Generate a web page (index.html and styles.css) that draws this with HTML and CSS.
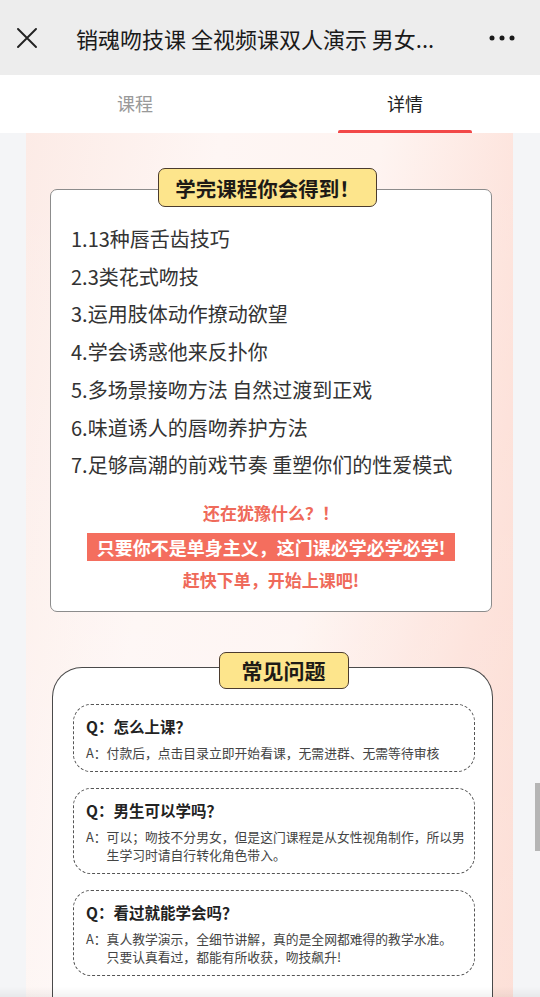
FILE: index.html
```html
<!DOCTYPE html>
<html lang="zh-CN">
<head>
<meta charset="utf-8">
<title>销魂吻技课</title>
<link rel="stylesheet" href="styles.css">
</head>
<body>
<header class="topbar">
  <svg class="icon-close" width="20" height="20" viewBox="0 0 20 20"><path d="M1 1 L19 19 M19 1 L1 19" stroke="#222" stroke-width="1.9" fill="none" stroke-linecap="round"/></svg>
  <div class="title">销魂吻技课 全视频课双人演示 男女...</div>
  <svg class="icon-more" width="26" height="6" viewBox="0 0 26 6"><circle cx="3" cy="3" r="2.5" fill="#1a1a1a"/><circle cx="13" cy="3" r="2.5" fill="#1a1a1a"/><circle cx="23" cy="3" r="2.5" fill="#1a1a1a"/></svg>
</header>
<nav class="tabs">
  <div class="tab"><span class="tab-text">课程</span></div>
  <div class="tab active"><span class="tab-text">详情</span><span class="tab-bar"></span></div>
</nav>
<main class="content">
  <section class="panel">
    <div class="card card-gain">
      <div class="badge badge-gain">学完课程你会得到！</div>
      <ol class="gain-list">
        <li>1.13种唇舌齿技巧</li>
        <li>2.3类花式吻技</li>
        <li>3.运用肢体动作撩动欲望</li>
        <li>4.学会诱惑他来反扑你</li>
        <li>5.多场景接吻方法 自然过渡到正戏</li>
        <li>6.味道诱人的唇吻养护方法</li>
        <li>7.足够高潮的前戏节奏 重塑你们的性爱模式</li>
      </ol>
      <p class="red-line first">还在犹豫什么？！</p>
      <p class="red-banner">只要你不是单身主义，这门课必学必学必学!</p>
      <p class="red-line">赶快下单，开始上课吧!</p>
    </div>
    <div class="card card-faq">
      <div class="badge badge-faq">常见问题</div>
      <div class="faq">
        <div class="q">Q：怎么上课？</div>
        <div class="a"><span class="a-label">A：</span><span class="a-text">付款后，点击目录立即开始看课，无需进群、无需等待审核</span></div>
      </div>
      <div class="faq">
        <div class="q">Q：男生可以学吗？</div>
        <div class="a"><span class="a-label">A：</span><span class="a-text">可以；吻技不分男女，但是这门课程是从女性视角制作，所以男<br>生学习时请自行转化角色带入。</span></div>
      </div>
      <div class="faq">
        <div class="q">Q：看过就能学会吗？</div>
        <div class="a"><span class="a-label">A：</span><span class="a-text">真人教学演示，全细节讲解，真的是全网都难得的教学水准。<br>只要认真看过，都能有所收获，吻技飙升!</span></div>
      </div>
    </div>
  </section>
</main>
<div class="scroll-thumb"></div>
<div class="bottom-fade"></div>
</body>
</html>
```

FILE: styles.css
```css
* { box-sizing: border-box; }
html, body { margin: 0; padding: 0; }
body {
  background: #f4f5f7;
  font-family: "Noto Sans CJK SC", "Noto Sans", sans-serif;
  color: #222;
  overflow: hidden;
  height: 997px;
}
.topbar {
  height: 75px;
  background: #ededed;
  display: flex;
  align-items: center;
  padding: 0 25px 0 17px;
}
.icon-close { flex: 0 0 20px; display: block; margin-top: 1px; }
.title {
  flex: 1;
  margin-left: 39px;
  font-size: 22px;
  line-height: 30px;
  color: #1a1a1a;
  white-space: nowrap;
  overflow: hidden;
}
.icon-more { flex: 0 0 26px; display: block; }
.tabs {
  height: 58px;
  background: #fff;
  display: flex;
}
.tab {
  flex: 1;
  display: flex;
  flex-direction: column;
  align-items: center;
  padding-top: 15px;
}
.tab-text {
  font-size: 18px;
  line-height: 26px;
  color: #999;
}
.tab.active .tab-text { color: #222; }
.tab-bar {
  margin-top: auto;
  width: 134px;
  height: 3px;
  border-radius: 2px 2px 0 0;
  background: #f24848;
}
.content {
  padding: 0 27px 0 26px;
}
.panel {
  background:
    linear-gradient(to bottom, rgba(255,255,255,0) 0%, rgba(255,255,255,0.25) 100%),
    linear-gradient(100deg, #fcebe6 0%, #fef6f4 30%, #fef4f1 55%, #fde0d8 82%, #fcd6cb 100%);
  padding: 56px 21px 40px 24px;
  min-height: 900px;
}
.card {
  background: #fff;
  display: flex;
  flex-direction: column;
}
.card-gain {
  border: 1px solid #8c8c8c;
  border-radius: 7px;
  padding: 0 20px 18px;
}
.badge {
  align-self: center;
  background: #fde58c;
  border: 1.5px solid #4b3b2e;
  border-radius: 7px;
  color: #1e1a16;
  font-weight: 700;
  display: flex;
  align-items: center;
  justify-content: center;
  white-space: nowrap;
}
.badge-gain {
  margin-top: -22px;
  margin-right: 7px;
  height: 39px;
  padding: 0 16px;
  font-size: 20.5px;
}
.gain-list {
  list-style: none;
  margin: 13px 0 0;
  padding: 0;
}
.gain-list li {
  font-size: 20px;
  line-height: 37.7px;
  color: #333;
  white-space: nowrap;
}
.red-line {
  margin: 6px 0 0;
  text-align: center;
  font-size: 17px;
  line-height: 26px;
  font-weight: 700;
  color: #ef6a5a;
}
.red-line.first { margin-top: 16px; }
.red-banner {
  align-self: center;
  margin: 7px 0 0;
  height: 28px;
  padding: 0 10px;
  background: #f46e5e;
  color: #fff;
  font-size: 18px;
  line-height: 28px;
  font-weight: 700;
  white-space: nowrap;
}
.card-faq {
  margin-top: 55px;
  margin-left: 2px;
  margin-right: -1px;
  border: 1.5px solid #4a4a4a;
  border-bottom: none;
  border-radius: 30px 30px 0 0;
  padding: 0 17px 40px 20px;
}
.badge-faq {
  margin-top: -16px;
  margin-left: 19px;
  height: 37px;
  padding: 0 22px;
  font-size: 21px;
}
.faq {
  border: 1px dashed #555;
  border-radius: 18px;
  padding: 10px 10px 9px 12px;
  margin-top: 16px;
}
.badge-faq + .faq { margin-top: 15px; }
.q {
  font-size: 15.5px;
  line-height: 22px;
  font-weight: 700;
  color: #222;
}
.a {
  display: flex;
  margin-top: 7px;
  font-size: 12.8px;
  line-height: 18px;
  color: #444;
}
.a-label {
  flex: 0 0 16px;
  white-space: nowrap;
}
.a-text { flex: 1; white-space: nowrap; }
.scroll-thumb {
  position: fixed;
  right: 0;
  top: 783px;
  width: 5px;
  height: 68px;
  background: #b5b5b5;
}
.bottom-fade {
  position: fixed;
  left: 0;
  right: 0;
  bottom: 0;
  height: 10px;
  background: linear-gradient(to bottom, rgba(0,0,0,0), rgba(0,0,0,0.05));
}
```
